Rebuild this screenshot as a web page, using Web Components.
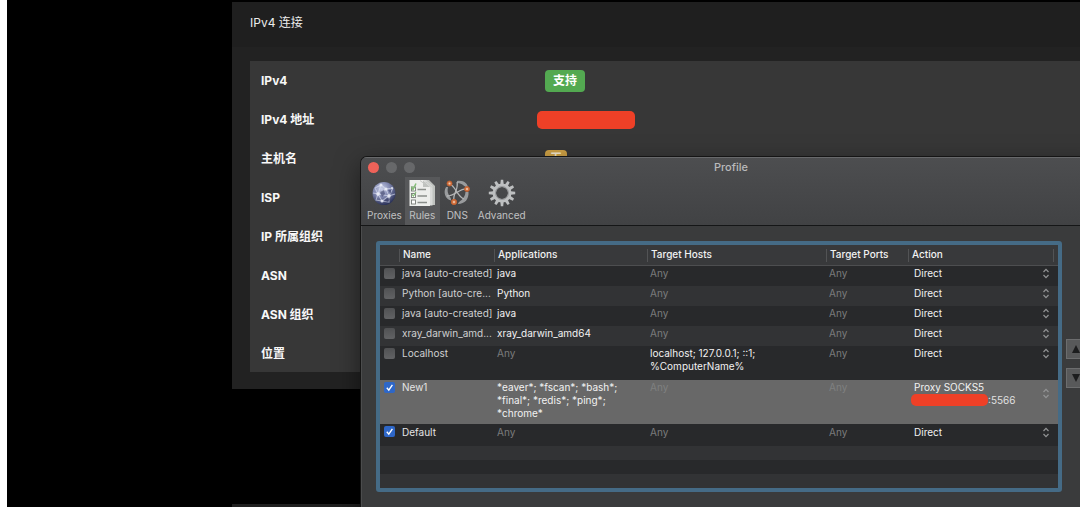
<!DOCTYPE html>
<html lang="zh-CN">
<head>
<meta charset="utf-8">
<title>Profile</title>
<style>
html, body { height: 100%; margin: 0; }
body { background: #fff; overflow: hidden; font-family: Inter, "Noto Sans CJK SC", sans-serif; }
</style>
</head>
<body>
<desktop-view>
  <info-card heading="IPv4 连接">
    <info-row label="IPv4"><status-badge tone="ok">支持</status-badge></info-row>
    <info-row label="IPv4 地址"><masked-value></masked-value></info-row>
    <info-row label="主机名"><status-badge tone="warn">无</status-badge></info-row>
    <info-row label="ISP"></info-row>
    <info-row label="IP 所属组织"></info-row>
    <info-row label="ASN"></info-row>
    <info-row label="ASN 组织"></info-row>
    <info-row label="位置"></info-row>
  </info-card>
  <info-card></info-card>
  <profile-window slot="window" heading="Profile">
    <tool-item slot="tools" label="Proxies">
      <svg width="28" height="28" viewBox="0 0 28 28" aria-hidden="true">
        <defs><radialGradient id="globe" cx=".4" cy=".3" r=".7"><stop offset="0" stop-color="#c9cfe8"/><stop offset=".5" stop-color="#8188b0"/><stop offset="1" stop-color="#2c3359"/></radialGradient></defs>
        <circle cx="14" cy="14.500" r="11.500" fill="url(#globe)"/>
        <g fill="none" stroke="#dde2f4" stroke-width="1.100" opacity=".6"><path d="M5 9L11 6L16 10L23 9M5 9L8 15L16 10L19 17L8 15L12 22L19 17L23 9M12 22L19 23L19 17L25 15M11 6L8 15M3 14L8 15L6 21L12 22"/></g>
        <g fill="#f1f3fb" opacity=".8"><circle cx="11" cy="6" r="1.500"/><circle cx="16" cy="10" r="1.600"/><circle cx="8" cy="15" r="1.800"/><circle cx="19" cy="17" r="1.800"/><circle cx="12" cy="22" r="1.500"/><circle cx="22" cy="9" r="1"/></g>
        <g fill="#3a4068" opacity=".6"><path d="M10 13l4-2 1 4-3 3zM17 19l3 1-2 3-4-1zM18 11l3 0 0 4z"/></g>
      </svg>
    </tool-item>
    <tool-item slot="tools" label="Rules" selected>
      <svg width="28" height="28" viewBox="0 0 28 28" aria-hidden="true">
        <path d="M9 1H21L27 7V26H12z" fill="#bfc2bf"/>
        <path d="M5 1H18L24.500 7V26.500H5z" fill="#d8dad8"/>
        <path d="M1.500 1H15L22 8V27H1.500z" fill="#edeeec"/>
        <path d="M15 1.500V8H22z" fill="#bfc2bf"/>
        <path d="M12 1.500l4 3 3-1 5 5" fill="none" stroke="#c5c8c5"/>
        <g fill="#fff" stroke="#777b77" stroke-width=".9"><rect x="3.500" y="8" width="4" height="4"/><rect x="3.500" y="14.500" width="4" height="4"/><rect x="3.500" y="21" width="4" height="4"/></g>
        <path d="M9.500 10.500H18M9.500 17H19M9.500 23.500H19" stroke="#8a8e8a" stroke-width="1.400"/>
        <path d="M3.500 7.500l1.500 3 3-6" fill="none" stroke="#83bd76" stroke-width="1.500"/>
        <path d="M4 15.500l1.500 1.500 2.500-4" fill="none" stroke="#83bd76" stroke-width="1.100"/>
      </svg>
    </tool-item>
    <tool-item slot="tools" label="DNS">
      <svg width="28" height="28" viewBox="0 0 28 28" aria-hidden="true">
        <g fill="#999b9d"><path d="M14 2C21 1 25 5 25 9C21 8 20 4 14 4z"/><path d="M25.500 13C26 20 22 25 15 25C15 22 22 21 22.500 13z"/><path d="M3 8C0 13 2 20 8 21.500C9 18 3 16 5 8z"/></g>
        <g fill="none" stroke="#b2b4b5" stroke-width="1.300"><path d="M6.500 4.500C13 8 14 17 21 20"/><path d="M24 10C17 9 12 17 4 17"/><path d="M11 22.500C9 15 16 11 14 3"/></g>
        <g fill="#d17443" stroke="#c8602c" stroke-width=".8"><circle cx="6.500" cy="4.500" r="2.500"/><circle cx="24" cy="10" r="2.500"/><circle cx="11" cy="23" r="2.700"/></g>
        <g fill="#f3cdb2"><circle cx="6.500" cy="4.500" r="1"/><circle cx="24" cy="10" r="1"/><circle cx="11" cy="23" r="1"/></g>
      </svg>
    </tool-item>
    <tool-item slot="tools" label="Advanced">
      <svg width="28" height="28" viewBox="0 0 28 28" aria-hidden="true">
        <defs><g id="tooth"><path d="M12.300 5.500L12.800 .8H15.200L15.700 5.500z"/></g></defs>
        <g fill="#bdbfc0">
          <use href="#tooth"/><use href="#tooth" transform="rotate(30 14 14)"/><use href="#tooth" transform="rotate(60 14 14)"/><use href="#tooth" transform="rotate(90 14 14)"/><use href="#tooth" transform="rotate(120 14 14)"/><use href="#tooth" transform="rotate(150 14 14)"/><use href="#tooth" transform="rotate(180 14 14)"/><use href="#tooth" transform="rotate(210 14 14)"/><use href="#tooth" transform="rotate(240 14 14)"/><use href="#tooth" transform="rotate(270 14 14)"/><use href="#tooth" transform="rotate(300 14 14)"/><use href="#tooth" transform="rotate(330 14 14)"/>
          <path fill-rule="evenodd" d="M14 4.500a9.500 9.500 0 1 0 0 19a9.500 9.500 0 1 0 0-19zM14 8a6 6 0 1 1 0 12a6 6 0 1 1 0-12z"/>
        </g>
        <circle cx="14" cy="14" r="6.500" fill="none" stroke="#8b8d8f" stroke-width=".8"/>
      </svg>
    </tool-item>
    <rules-table></rules-table>
    <order-buttons></order-buttons>
  </profile-window>
</desktop-view>
<script>
const define = (name, html, setup) => customElements.define(name, class extends HTMLElement {
  connectedCallback() {
    if (this.shadowRoot) return;
    const root = this.attachShadow({ mode: 'open' });
    root.innerHTML = html;
    if (setup) setup(this, root);
  }
});

define('desktop-view', `
<style>
:host { display: block; position: relative; height: 100vh; overflow: hidden; margin-left: 7px; background: #000; }
main { display: grid; gap: 115px; padding-top: 2px; margin-left: 225px; margin-right: -21px; }
</style>
<main><slot></slot></main><slot name="window"></slot>`);

define('info-card', `
<style>
:host { display: block; background: #222; color: #f2f2f2; min-height: 60px; }
h2 { margin: 0; padding: 12px 18px 0; height: 33px; line-height: 18px; font-size: 12px; font-weight: 400; background: #1f1f1f; color: #ececec; }
section { padding: 14px 18px 17px; }
div { display: grid; gap: 1px; background: #373737; }
</style>
<h2></h2><section><div><slot></slot></div></section>`, (el, root) => {
  root.querySelector('h2').textContent = el.getAttribute('heading') || '';
});

define('info-row', `
<style>
:host { display: grid; grid-template-columns: 284px 1fr; align-items: center; box-sizing: border-box; height: 38px; padding: 2px 0 0 11px; font-size: 12px; line-height: 18px; }
strong { font-weight: 700; color: #f8f8f8; }
</style>
<strong></strong><span><slot></slot></span>`, (el, root) => {
  root.querySelector('strong').textContent = el.getAttribute('label');
});

define('status-badge', `
<style>
:host { display: block; width: fit-content; box-sizing: border-box; height: 22px; padding: 0 8px; border-radius: 4px; line-height: 22px; font-weight: 700; font-size: 12px; color: #fff; background: #53a951; }
:host([tone="warn"]) { background: #cfa246; height: 18px; line-height: 18px; padding: 0 5px; color: #f5ead0; }
</style><slot></slot>`);

define('masked-value', `
<style>
:host { display: block; width: 98px; height: 18px; margin-left: -8px; border-radius: 5px; background: #ee4027; }
</style>`);

define('profile-window', `
<style>
:host { position: absolute; left: 354px; right: -21px; top: 157px; bottom: -20px; box-sizing: border-box; overflow: hidden;
  border-radius: 6px 6px 0 0; background: #3a3b3c; box-shadow: 0 0 0 1px #151515, 0 8px 26px rgba(0,0,0,.5); }
header { height: 68px; background: linear-gradient(#4d4e50, #414244); border-bottom: 1px solid #151617; box-shadow: inset 0 1px #68696b; }
.bar { display: grid; grid-template-columns: 1fr auto 1fr; align-items: center; height: 20px; padding: 0 7px; }
.lights { display: flex; gap: 7px; }
.lights button { width: 11px; height: 11px; padding: 0; border: 0; border-radius: 50%; background: #67686a; }
.lights button:first-child { background: #ef6259; }
h1 { margin: 0; font-size: 11px; line-height: 20px; font-weight: 500; color: #b9babb; }
nav { display: flex; height: 48px; padding-left: 3px; }
.body { display: flex; gap: 4px; padding: 15px; align-items: flex-start; box-shadow: inset 1px 0 #4b4c4d; }
</style>
<header>
  <div class="bar"><div class="lights"><button aria-label="Close"></button><button aria-label="Minimize"></button><button aria-label="Zoom"></button></div><h1></h1></div>
  <nav><slot name="tools"></slot></nav>
</header>
<div class="body"><slot></slot></div>`, (el, root) => {
  root.querySelector('h1').textContent = el.getAttribute('heading');
});

define('tool-item', `
<style>
:host { display: block; min-width: 35px; }
button { display: grid; justify-items: center; width: 100%; height: 48px; padding: 2px 3px 0; border: 0; background: none; font: 400 10px/16px Inter, sans-serif; color: #c0c1c2; grid-template-rows: 28px 16px; align-content: start; }
:host([selected]) button { background: #57585a; padding-left: 0; padding-right: 0; }
</style>
<button><slot></slot><span></span></button>`, (el, root) => {
  root.querySelector('span').textContent = el.getAttribute('label');
});

const ANY = '<span class="any">Any</span>';
const RULES = [
  { name: 'java [auto-created]', apps: 'java', hosts: ANY },
  { name: 'Python [auto-cre...', apps: 'Python', hosts: ANY },
  { name: 'java [auto-created]', apps: 'java', hosts: ANY },
  { name: 'xray_darwin_amd...', apps: 'xray_darwin_amd64', hosts: ANY },
  { name: 'Localhost', apps: ANY, hosts: 'localhost; 127.0.0.1; ::1;<br>%ComputerName%', size: 'two' },
  { name: 'New1', apps: '*eaver*; *fscan*; *bash*;<br>*final*; *redis*; *ping*;<br>*chrome*', hosts: ANY, on: true, size: 'three', proxy: true },
  { name: 'Default', apps: ANY, hosts: ANY, on: true, size: 'last' }
];

define('rule-action', `
<style>
:host { display: grid; grid-template-columns: 1fr 8px; align-items: center; padding-right: 3px; }
select { display: block; appearance: none; width: 100%; height: 13px; padding: 0; margin: 0; border: 0; background: none; color: inherit; font: inherit; }
svg { display: block; }
.detail { display: flex; align-items: center; height: 12px; color: #e0e0e0; }
i { width: 77px; height: 12px; margin-left: -3px; border-radius: 5px; background: #ee4027; }
</style>
<div><select aria-label="Action"><option></option></select></div>
<svg width="8" height="11" viewBox="0 0 8 11" fill="none" stroke="#929394" stroke-width="1.200" aria-hidden="true"><path d="M1.500 4L4 1.300L6.500 4M1.500 7L4 9.700L6.500 7"/></svg>`, (el, root) => {
  root.querySelector('option').textContent = el.getAttribute('value');
  const detail = el.getAttribute('detail');
  if (detail) root.querySelector('div').insertAdjacentHTML('beforeend', `<span class="detail"><i></i>${detail}</span>`);
});

define('rules-table', `
<style>
:host { display: block; flex: 1; min-width: 0; border: 4px solid #456b86; border-radius: 3px; box-sizing: border-box; }
table { width: 100%; border-spacing: 0; table-layout: fixed; font-size: 10px; line-height: 13px; color: #f2f2f2; background: #28292b; }
col.check { width: 19px; } col.name { width: 95px; } col.apps { width: 153px; } col.ports { width: 82px; } col.action { width: 145px; } col.end { width: 5px; }
th, td { box-sizing: border-box; }
th { height: 21px; padding: 0 0 1px 4px; text-align: left; font-weight: 500; color: #f2f2f2; background: #38393b; border-bottom: 1px solid #4d4e50;
  background-image: linear-gradient(#525355, #525355); background-size: 1px 13px; background-position: 0 4px; background-repeat: no-repeat; }
th:first-child { background-image: none; }
td { padding: 1px 0 0 3px; height: 20px; vertical-align: top; font-weight: 400; white-space: nowrap; overflow: hidden; }
td.name { color: #cfd0d1; }
td.action { padding-left: 6px; }
td.check { padding: 2px 0 0 4px; }
tr:nth-child(even) td { background: #323335; }
tr.two td { height: 34px; }
tr.three td { height: 44px; background: #686868; }
tr.last td { height: 22px; padding-top: 2px; }
tr.fill td { height: 14px; padding: 0; background: #323335; }
tr.fill.dark td { background: #28292b; }
td .any { color: #7b7c7d; }
tr.three .any { color: #7f8080; }
tr.three td.name, tr.last td.name { color: #e4e4e4; }
input { appearance: none; display: block; width: 11px; height: 11px; margin: 0; border-radius: 2px; background: linear-gradient(#505153, #626365); }
input:checked { background: #2e67c8 url('data:image/svg+xml,<svg xmlns="http://www.w3.org/2000/svg" viewBox="0 0 11 11"><path d="M2.800 5.800L4.800 8.200L8.400 2.800" fill="none" stroke="white" stroke-width="1.400"/></svg>'); }
</style>
<table>
<colgroup><col class="check"><col class="name"><col class="apps"><col><col class="ports"><col class="action"><col class="end"></colgroup>
<thead><tr><th></th><th>Name</th><th>Applications</th><th>Target Hosts</th><th>Target Ports</th><th>Action</th><th></th></tr></thead>
<tbody></tbody>
</table>`, (el, root) => {
  root.querySelector('tbody').innerHTML = RULES.map(r => `<tr class="${r.size || ''}">
    <td class="check"><input type="checkbox" aria-label="${r.name}"${r.on ? ' checked' : ''}></td>
    <td class="name">${r.name}</td><td>${r.apps}</td><td>${r.hosts}</td><td>${ANY}</td>
    <td class="action">${r.proxy ? '<rule-action value="Proxy SOCKS5" detail=":5566"></rule-action>' : '<rule-action value="Direct"></rule-action>'}</td><td></td></tr>`).join('')
    + '<tr class="fill"><td colspan="7"></td></tr><tr class="fill dark"><td colspan="7"></td></tr><tr class="fill"><td colspan="7"></td></tr>';
});

define('order-buttons', `
<style>
:host { display: grid; gap: 9px; width: 20px; padding-top: 98px; }
button { width: 20px; height: 20px; padding: 0; border: 1px solid #6c6d6e; background: #58595a; display: grid; place-items: center; }
</style>
<button aria-label="Move up"><svg width="10" height="10" viewBox="0 0 10 10"><path d="M5 1L9 9H1z" fill="#1c1d1e"/></svg></button>
<button aria-label="Move down"><svg width="10" height="10" viewBox="0 0 10 10"><path d="M5 9L9 1H1z" fill="#1c1d1e"/></svg></button>`);
</script>
</body>
</html>
